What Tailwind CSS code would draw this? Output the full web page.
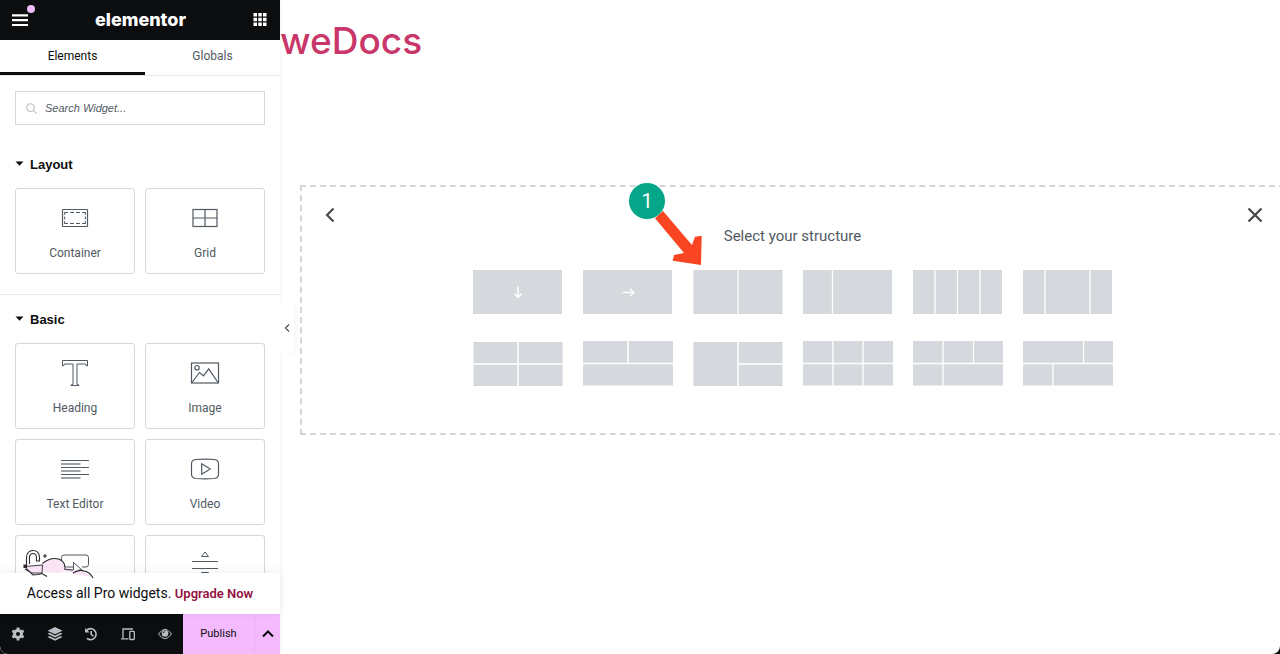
<!DOCTYPE html>
<html lang="en">
<head>
  <meta charset="UTF-8" />
  <meta name="viewport" content="width=device-width, initial-scale=1" />
  <title>Elementor – weDocs</title>
  <script src="https://cdn.jsdelivr.net/npm/@tailwindcss/browser@4"></script>
</head>
<body class="bg-[#0c0d0e] font-['Roboto',sans-serif]">

<div class="flex h-screen overflow-hidden rounded-b-lg bg-white">

  <!-- Panel -->
  <aside class="relative z-10 flex w-[280px] shrink-0 flex-col bg-white shadow-[0_0_4px_rgba(0,0,0,0.08)]">
    <header class="flex h-10 shrink-0 items-center justify-between bg-[#0c0d0e] px-3 text-white">
      <button class="relative" aria-label="Menu">
        <svg class="h-4 w-4" viewBox="0 0 16 16" fill="none" stroke="currentColor" stroke-width="2.200"><path d="M0 3.400h16M0 8.200h16M0 13h16"/></svg>
        <span class="absolute -top-[7px] left-[15px] h-2 w-2 rounded-full bg-[#eebcf8]"></span>
      </button>
      <h1 class="font-['Inter',sans-serif] text-lg leading-5 font-extrabold">elementor</h1>
      <button class="mr-px" aria-label="Widgets">
        <svg class="h-[14px] w-[14px]" viewBox="0 0 14 14" fill="currentColor"><path d="M.5 0H4v3.500H.5zM5.300 0h3.500v3.500H5.300zM10 0h3.500v3.500H10zM.5 4.700H4v3.500H.5zM5.300 4.700h3.500v3.500H5.300zM10 4.700h3.500v3.500H10zM.5 9.400H4v3.500H.5zM5.300 9.400h3.500v3.500H5.300zM10 9.400h3.500v3.500H10z"/></svg>
      </button>
    </header>

    <nav class="flex h-9 shrink-0 border-b border-[#e6e8ea] text-xs">
      <button class="w-[145px] border-b-[3px] border-[#0c0d0e] text-[#0c0d0e]">Elements</button>
      <button class="flex-1 border-b-[3px] border-transparent text-[#515962]">Globals</button>
    </nav>

    <div class="min-h-0 flex-1 overflow-hidden">
      <div class="px-[15px] pt-[15px]">
        <label class="flex h-[34px] items-center gap-2 border border-[#d5d8dc] px-2.5">
          <svg class="h-[11px] w-[11px] shrink-0 text-[#babfc5]" viewBox="0 0 12 12" fill="none" stroke="currentColor" stroke-width="1.200" aria-hidden="true"><circle cx="5" cy="5" r="4.200"/><path d="M8 8l3.500 3.500"/></svg>
          <input type="text" aria-label="Search Widget" placeholder="Search Widget..." class="w-full font-['Liberation_Sans',sans-serif] text-[11px] italic outline-none placeholder:text-[#515962]" />
        </label>
      </div>

      <section class="border-b border-[#e6e8ea] px-[15px] pt-[30px] pb-5">
        <h2 class="flex h-5 items-center gap-1.5 font-['Liberation_Sans',sans-serif] text-[13px] font-bold text-[#0c0d0e]">
          <svg class="h-2 w-[9px]" viewBox="0 0 9 8" fill="currentColor"><path d="M.5 .5h8L4.500 4.800z"/></svg>Layout
        </h2>
        <div class="mt-[13px] grid grid-cols-2 gap-2.5 text-xs text-[#515962]">
          <button class="flex h-[86px] flex-col items-center rounded-[3px] border border-[#d5d8dc] pt-[14px]">
            <svg class="h-[30px] w-[30px]" viewBox="0 0 30 30" fill="none" stroke="currentColor"><rect x="2.500" y="6.500" width="25" height="17" rx=".5" stroke-width="1.200"/><path d="M5 9.500h3M10 9.500h4M16 9.500h4M22 9.500h3M5 20.500h3M10 20.500h4M16 20.500h4M22 20.500h3M4.700 9v3M4.700 13.500v3M4.700 18v3M25.300 9v3M25.300 13.500v3M25.300 18v3"/></svg>
            <span class="mt-3 leading-4">Container</span>
          </button>
          <button class="flex h-[86px] flex-col items-center rounded-[3px] border border-[#d5d8dc] pt-[14px]">
            <svg class="h-[30px] w-[30px]" viewBox="0 0 30 30" fill="none" stroke="currentColor" stroke-width="1.200"><rect x="3" y="6.500" width="24" height="17"/><path d="M15 6.500v17M3 15h24"/></svg>
            <span class="mt-3 leading-4">Grid</span>
          </button>
        </div>
      </section>

      <section class="px-[15px] pt-[15px]">
        <h2 class="flex h-5 items-center gap-1.5 font-['Liberation_Sans',sans-serif] text-[13px] font-bold text-[#0c0d0e]">
          <svg class="h-2 w-[9px]" viewBox="0 0 9 8" fill="currentColor"><path d="M.5 .5h8L4.500 4.800z"/></svg>Basic
        </h2>
        <div class="mt-[13px] grid grid-cols-2 gap-2.5 text-xs text-[#515962]">
          <button class="flex h-[86px] flex-col items-center rounded-[3px] border border-[#d5d8dc] pt-[14px]">
            <svg class="h-[30px] w-[30px]" viewBox="0 0 30 30" fill="none" stroke="currentColor"><path d="M2.500 2.500h25v5.500h-1l-1-2H17v20.500l2 .5v.500h-8V27l2-.5V6H4.500l-1 2h-1z"/></svg>
            <span class="mt-3 leading-4">Heading</span>
          </button>
          <button class="flex h-[86px] flex-col items-center rounded-[3px] border border-[#d5d8dc] pt-[14px]">
            <svg class="h-[30px] w-[30px]" viewBox="0 0 30 30" fill="none" stroke="currentColor" stroke-width="1.200"><rect x="1.500" y="5" width="27" height="20"/><circle cx="7" cy="9.700" r="2.200"/><path d="M2 24.500l7.500-10 4 3.300 5.200-7L28 24.500"/></svg>
            <span class="mt-3 leading-4">Image</span>
          </button>
          <button class="flex h-[86px] flex-col items-center rounded-[3px] border border-[#d5d8dc] pt-[14px]">
            <svg class="h-[30px] w-[30px]" viewBox="0 0 30 30" fill="none" stroke="currentColor"><path d="M1 6.500h28M1 13.500h28M1 20.500h28"/><path d="M1 10h19.500M1 17h19.500M1 24h19.500" stroke-width="1.500" stroke-opacity=".75"/></svg>
            <span class="mt-3 leading-4">Text Editor</span>
          </button>
          <button class="flex h-[86px] flex-col items-center rounded-[3px] border border-[#d5d8dc] pt-[14px]">
            <svg class="h-[30px] w-[30px]" viewBox="0 0 30 30" fill="none" stroke="currentColor" stroke-width="1.200"><path d="M5.500 5.500Q15 4.600 24.500 5.500 28.500 6 28.500 10v10Q28.500 24 24.500 24.500 15 25.400 5.500 24.500 1.500 24 1.500 20V10Q1.500 6 5.500 5.500zM11.700 9.800v10.400l8.500-5.200z"/></svg>
            <span class="mt-3 leading-4">Video</span>
          </button>
          <button class="flex h-[86px] flex-col items-center rounded-[3px] border border-[#d5d8dc] pt-[14px]" aria-label="Button">
            <svg class="h-[30px] w-[30px]" viewBox="0 0 30 30" fill="none" stroke="currentColor"><path d="M14 17H4q-2.500 0-2.500-2.500v-7Q1.500 5 4 5h22q2.500 0 2.500 2.500v7Q28.500 17 26 17h-4"/><path d="M13.500 12.500v11l3-2.500 2 4 2-1-2-4h3.500z"/></svg>
          </button>
          <button class="flex h-[86px] flex-col items-center rounded-[3px] border border-[#d5d8dc] pt-[14px]" aria-label="Divider">
            <svg class="h-[30px] w-[30px]" viewBox="0 0 30 30" fill="none" stroke="currentColor"><path d="M11.500 6.500L15 2l3.500 4.500zM2 11.500h26M2 18.500h26M11.500 22.500h7L15 27z"/></svg>
          </button>
        </div>
      </section>
    </div>

    <div class="relative shrink-0 bg-white py-2.5 text-center text-sm leading-[21px] text-[#0c0d0e] shadow-[0_-2px_10px_rgba(0,0,0,0.06)]">
      <svg class="absolute -top-6 left-[22px] h-[30px] w-[74px]" viewBox="0 0 74 30" fill="none" stroke="#28282e" stroke-width="1.100" aria-hidden="true">
        <path d="M20 15q8-7 16-5 6 2 7 8l8 3 10 0 8 7-17-3-8-4-8 3-14-1z" fill="#fbe4f6" stroke="none"/>
        <path d="M4.500 16V8.500q.5-7 6.500-7t6.500 6.500v4h-3V8.500q0-4-3.500-4T7.500 8.500V15"/>
        <path d="M3 17.500l17.500-1.500-.5 8H9z" fill="#fbe4f6" stroke-width=".9"/>
        <path d="M2 16h2.500v2.500H2z" fill="#28282e"/>
        <path d="M3 20l5 3 3 3 5-.5 4-1 5 3M20.500 14.500q8-6.500 16-4.500 6 2 6.500 8v2.500l8 .500M51 24q6-4 11-2 6 1 9 7"/>
        <path d="M23 5v4M21 7h4"/>
      </svg>
      Access all Pro widgets.
      <a href="#" class="text-[13px] font-semibold text-[#93123f]">Upgrade Now</a>
    </div>

    <footer class="flex h-10 shrink-0 bg-[#0c0d0e] text-[#babfc5]">
      <div class="flex flex-1 items-center">
        <button class="flex flex-1 justify-center" aria-label="Settings">
          <svg class="h-[14px] w-[14px]" viewBox="0 0 14 14" fill="none" stroke="currentColor"><circle cx="7" cy="7" r="3.500" stroke-width="3"/><path d="M7 .5v3M7 10.500v3M1.400 3.800L4 5.300M10 8.700l2.600 1.500M1.400 10.200L4 8.700M10 5.300l2.600-1.500" stroke-width="2.800"/></svg>
        </button>
        <button class="flex flex-1 justify-center" aria-label="Structure">
          <svg class="h-4 w-4" viewBox="0 0 16 16" fill="currentColor"><path d="M8 1l7.500 3.700L8 8.300.5 4.700zM2.500 6.700L8 9.500l5.500-2.800 2 1.100L8 11.500.5 7.800zM2.500 10L8 12.700l5.500-2.700 2 1L8 14.800.5 11z"/></svg>
        </button>
        <button class="flex flex-1 justify-center" aria-label="History">
          <svg class="h-[14px] w-[14px]" viewBox="0 0 14 14" fill="none" stroke="currentColor" stroke-width="1.600"><path d="M2.500 3.500A5.500 5.500 0 1 1 3 11.300M7.200 4v3.400l2.300 1.700"/><path d="M1 1v4.500h4.500z" fill="currentColor" stroke="none"/></svg>
        </button>
        <button class="flex flex-1 justify-center" aria-label="Responsive Mode">
          <svg class="h-[14px] w-[14px]" viewBox="0 0 14 14" fill="none" stroke="currentColor" stroke-width="1.300"><path d="M12 2H2v9M0 11.800h7.500"/><rect x="8.800" y="4.300" width="4.500" height="8.200" rx=".7"/></svg>
        </button>
        <button class="flex flex-1 justify-center" aria-label="Preview">
          <svg class="h-[14px] w-[14px]" viewBox="0 0 14 14" fill="none" stroke="currentColor"><path d="M.5 7Q7-2.500 13.500 7 7 16.500.5 7z"/><circle cx="7" cy="6.500" r="3.300" fill="currentColor" stroke="none"/><path d="M5.300 6.300Q5.500 4.900 6.800 4.700" stroke="#0c0d0e"/></svg>
        </button>
      </div>
      <button class="w-[71px] bg-[#f3bafd] text-[11px] text-[#0c0d0e]">Publish</button>
      <button class="flex w-[26px] items-center justify-center border-l border-[#e9aef5] bg-[#f3bafd] text-[#0c0d0e]" aria-label="Save options">
        <svg class="h-3 w-3" viewBox="0 0 12 12" fill="none" stroke="currentColor" stroke-width="2"><path d="M1 8.500l5-5 5 5"/></svg>
      </button>
    </footer>

    <button class="absolute top-[303px] left-full flex h-[50px] w-[14px] items-center justify-center rounded-r-[3px] bg-white text-[#515962] shadow-[3px_1px_5px_rgba(0,0,0,0.03)]" aria-label="Hide panel">
      <svg class="h-2 w-[6px]" viewBox="0 0 6 8" fill="none" stroke="currentColor" stroke-width="1.300"><path d="M5 .5L1.500 4 5 7.500"/></svg>
    </button>
  </aside>

  <!-- Preview -->
  <main class="min-w-0 flex-1 overflow-hidden">
    <a href="#" class="mt-[17px] block font-['Inter',sans-serif] text-[37px] leading-[48px] font-medium text-[#c9366a]">weDocs</a>

    <section class="relative mt-[120px] -mr-[5px] ml-5 h-[250px] border-2 border-dashed border-[#d5d5d5] pt-[39px] text-[#515962]">
      <button class="absolute top-5 left-[22px] text-[#494c50]" aria-label="Back">
        <svg class="h-4 w-3" viewBox="0 0 12 16" fill="none" stroke="currentColor" stroke-width="2.200"><path d="M9.500 1.500L3 8l6.500 6.500"/></svg>
      </button>
      <button class="absolute top-5 right-5 text-[#494c50]" aria-label="Close">
        <svg class="h-4 w-4" viewBox="0 0 16 16" fill="none" stroke="currentColor" stroke-width="2.400"><path d="M1.500 1.500l13 13M14.500 1.500l-13 13"/></svg>
      </button>

      <h2 class="text-center text-[15px] leading-5">Select your structure</h2>

      <div class="mt-6 grid grid-cols-[repeat(6,90px)] justify-center gap-x-5 gap-y-[27px]">
        <button aria-label="Column"><svg class="h-11 w-[90px]" viewBox="0 0 90 44" fill="none" stroke="#fff"><path fill="#d5d8dc" stroke="none" d="M0 0h89v44H0z"/><path stroke-width="1.500" d="M45 16.500v11M41.200 23.500l3.800 3.800 3.800-3.800"/></svg></button>
        <button aria-label="Row"><svg class="h-11 w-[90px]" viewBox="0 0 90 44" fill="none" stroke="#fff"><path fill="#d5d8dc" stroke="none" d="M0 0h89v44H0z"/><path stroke-width="1.500" d="M39.500 22.500h11M47 18.700l3.800 3.800-3.800 3.800"/></svg></button>
        <button aria-label="50 / 50"><svg class="h-11 w-[90px]" viewBox="0 0 90 44" fill="none" stroke="#fff"><path fill="#d5d8dc" stroke="none" d="M.5 0h89v44H.5z"/><path stroke-width="1.300" d="M45 0v44"/></svg></button>
        <button aria-label="33 / 66"><svg class="h-11 w-[90px]" viewBox="0 0 90 44" fill="none" stroke="#fff"><path fill="#d5d8dc" stroke="none" d="M0 0h89v44H0z"/><path stroke-width="1.300" d="M29.500 0v44"/></svg></button>
        <button aria-label="25 / 25 / 25 / 25"><svg class="h-11 w-[90px]" viewBox="0 0 90 44" fill="none" stroke="#fff"><path fill="#d5d8dc" stroke="none" d="M0 0h89v44H0z"/><path stroke-width="1.300" d="M22 0v44M44.500 0v44M67 0v44"/></svg></button>
        <button aria-label="25 / 50 / 25"><svg class="h-11 w-[90px]" viewBox="0 0 90 44" fill="none" stroke="#fff"><path fill="#d5d8dc" stroke="none" d="M0 0h89v44H0z"/><path stroke-width="1.300" d="M22 0v44M67 0v44"/></svg></button>
        <button aria-label="Two by two"><svg class="h-[45px] w-[90px]" viewBox="0 0 90 45" fill="none" stroke="#fff"><path fill="#d5d8dc" stroke="none" d="M.5 1h89v44H.5z"/><path stroke-width="1.500" d="M45 0v45M0 23h90"/></svg></button>
        <button aria-label="Two over one"><svg class="h-[45px] w-[90px]" viewBox="0 0 90 45" fill="none" stroke="#fff"><path fill="#d5d8dc" stroke="none" d="M0 0h90v44.500H0z"/><path stroke-width="1.500" d="M45 0v22.500M0 22.500h90"/></svg></button>
        <button aria-label="One beside two"><svg class="h-[45px] w-[90px]" viewBox="0 0 90 45" fill="none" stroke="#fff"><path fill="#d5d8dc" stroke="none" d="M.5 1h89v44H.5z"/><path stroke-width="1.500" d="M45 0v45M45 23h45"/></svg></button>
        <button aria-label="Three by two"><svg class="h-[45px] w-[90px]" viewBox="0 0 90 45" fill="none" stroke="#fff"><path fill="#d5d8dc" stroke="none" d="M0 0h90v44.500H0z"/><path stroke-width="1.300" d="M30 0v45M60 0v45M0 22.500h90"/></svg></button>
        <button aria-label="Three over two"><svg class="h-[45px] w-[90px]" viewBox="0 0 90 45" fill="none" stroke="#fff"><path fill="#d5d8dc" stroke="none" d="M0 0h90v44.500H0z"/><path stroke-width="1.300" d="M30 0v45M60.500 0v22.500M0 22.500h90"/></svg></button>
        <button aria-label="66 / 33 over 33 / 66"><svg class="h-[45px] w-[90px]" viewBox="0 0 90 45" fill="none" stroke="#fff"><path fill="#d5d8dc" stroke="none" d="M0 0h90v44.500H0z"/><path stroke-width="1.300" d="M60.500 0v22.500M30 22.500v22.500M0 22.500h90"/></svg></button>
      </div>

      <!-- Step marker -->
      <div class="absolute -top-1 left-[327px]">
        <svg class="absolute top-6 left-6 h-[60px] w-[50px]" viewBox="0 0 50 60" fill="#fa4522" aria-hidden="true"><path d="M2 11.300L10 4l29 34 3-8.300 6.700-1L48 58 19.700 53.700 21 48l10-2z"/></svg>
        <span class="relative flex h-9 w-9 items-center justify-center rounded-full bg-[#05a58a] text-xl text-white">1</span>
      </div>
    </section>
  </main>
</div>

</body>
</html>
